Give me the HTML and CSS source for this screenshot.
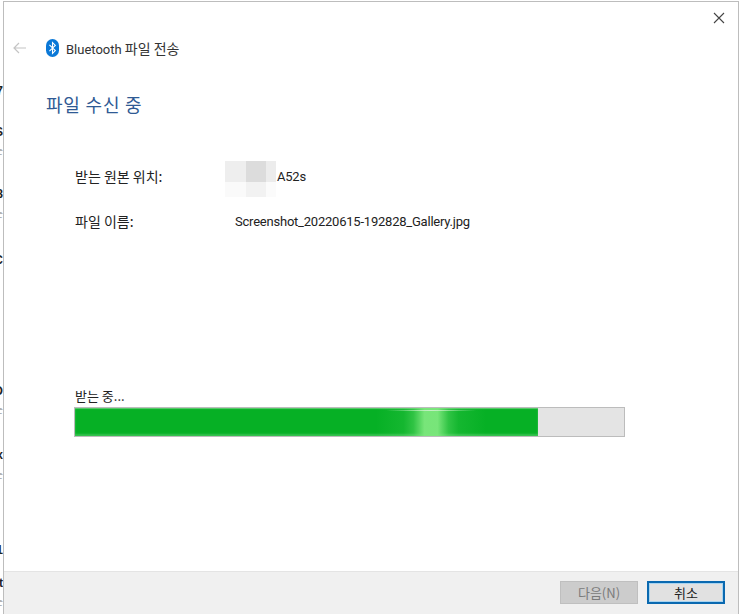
FILE: index.html
```html
<!DOCTYPE html>
<html>
<head>
    <title>Bluetooth 파일 전송</title>
    <link rel="stylesheet" href="styles.css">
</head>
<body>
    <div class="behind">
        <span class="frag frag-1">7</span>
        <span class="frag frag-2">S</span>
        <span class="tiny tiny-2">는</span>
        <span class="frag frag-3">8</span>
        <span class="tiny tiny-3">는</span>
        <span class="frag frag-4">C</span>
        <span class="frag frag-5">D</span>
        <span class="tiny tiny-5">는</span>
        <span class="frag frag-6">x</span>
        <span class="tiny tiny-6">는</span>
        <span class="frag frag-7">1</span>
        <span class="frag frag-8">t</span>
        <span class="tiny tiny-8">는</span>
    </div>
    <div class="window">
        <div class="close-row">
            <svg class="close" width="12" height="12" viewBox="0 0 12 12">
                <path d="M1 1L11 11M11 1L1 11" stroke="#444" stroke-width="1.1" fill="none"/>
            </svg>
        </div>
        <div class="title-row">
            <svg class="back" width="16" height="12" viewBox="0 0 16 12">
                <path d="M14 6H2M7 1L2 6L7 11" stroke="#c4c4c4" stroke-width="1.2" fill="none"/>
            </svg>
            <svg class="bt" width="13" height="18" viewBox="0 0 13 18">
                <rect x="0" y="0" width="13" height="18" rx="6.5" fill="#0a78d7"/>
                <path d="M3.4 5.8L9.3 11.6L6.5 14.4V3.6L9.3 6.4L3.4 12.2" stroke="#fff" stroke-width="1.1" fill="none"/>
            </svg>
            <span class="title-text"><span class="latin">Bluetooth</span> 파일 전송</span>
        </div>
        <h1 class="heading">파일 수신 중</h1>
        <div class="info">
            <div class="info-row">
                <span class="info-label">받는 원본 위치:</span>
                <span class="device">
                    <span class="mosaic">
                        <i class="m1"></i><i class="m2"></i><i class="m3"></i>
                        <i class="m4"></i><i class="m5"></i><i class="m6"></i>
                    </span>
                    <span class="device-name latin">A52s</span>
                </span>
            </div>
            <div class="info-row">
                <span class="info-label">파일 이름:</span>
                <span class="file-name latin">Screenshot_20220615-192828_Gallery.jpg</span>
            </div>
        </div>
        <div class="progress-area">
            <div class="progress-label">받는 중...</div>
            <div class="progress">
                <div class="progress-fill" style="width: 84.4%">
                    <div class="shine"></div>
                    <div class="streak"></div>
                </div>
            </div>
        </div>
        <div class="footer">
            <button class="btn btn-disabled">다음(N)</button>
            <button class="btn btn-default">취소</button>
        </div>
    </div>
</body>
</html>
```

FILE: styles.css
```css
html, body {
    margin: 0;
    height: 100%;
}
body {
    width: 740px;
    height: 615px;
    overflow: hidden;
    display: flex;
    background: #fff;
    font-family: "Noto Sans CJK KR", sans-serif;
    color: #222;
}
.latin {
    font-family: Roboto, sans-serif;
}
.behind {
    position: relative;
    width: 3px;
    overflow: hidden;
    background: #fff;
    flex: none;
}
.frag {
    position: absolute;
    right: 0;
    font: bold 12px "Liberation Sans", sans-serif;
    color: #222;
}
.tiny {
    position: absolute;
    right: 0;
    font-size: 9px;
    line-height: 12px;
    color: #777;
}
.frag-1 { top: 84px; }
.frag-2 { top: 125px; }
.frag-3 { top: 187px; }
.frag-4 { top: 253px; }
.frag-5 { top: 384px; }
.frag-6 { top: 448px; }
.frag-7 { top: 543px; }
.frag-8 { top: 576px; }
.tiny-2 { top: 145px; }
.tiny-3 { top: 208px; }
.tiny-5 { top: 404px; }
.tiny-6 { top: 469px; }
.tiny-8 { top: 596px; }
.window {
    width: 736px;
    height: 613px;
    margin-top: 1px;
    border: 1px solid #bdbdbd;
    border-bottom: 0;
    display: flex;
    flex-direction: column;
    background: #fff;
    box-sizing: border-box;
    flex: none;
}
.close-row {
    height: 31px;
    display: flex;
    justify-content: flex-end;
    align-items: center;
    padding-right: 13px;
}
.title-row {
    height: 30px;
    display: flex;
    align-items: center;
    padding-left: 9px;
}
.back {
    margin-left: -1px;
}
.bt {
    margin-left: 18px;
}
.title-text {
    margin-left: 7px;
    font-size: 14px;
    color: #333;
}
.title-text .latin {
    font-size: 13px;
}
.heading {
    margin: 29px 0 0 42px;
    font-size: 18px;
    font-weight: 400;
    line-height: 24px;
    color: #2f5a94;
    letter-spacing: 0.8px;
}
.info {
    margin: 48px 0 0 71px;
    font-size: 14px;
}
.info-row {
    height: 24px;
    margin-bottom: 21px;
    display: flex;
    align-items: center;
}
.info-label {
    width: 160px;
}
.device {
    display: flex;
    align-items: center;
    position: relative;
}
.mosaic {
    position: absolute;
    left: -10px;
    top: -8px;
    width: 51px;
    height: 36px;
    display: grid;
    grid-template-columns: 21px 20px 10px;
    grid-template-rows: 21px 15px;
}
.m1 { background: #eeeeee; }
.m2 { background: #dcdcdc; }
.m3 { background: #ececec; }
.m4 { background: #fafafa; }
.m5 { background: #f2f2f2; }
.m6 { background: #fbfbfb; }
.device-name {
    margin-left: 42px;
    position: relative;
    font-size: 13px;
    letter-spacing: -0.22px;
}
.file-name {
    font-size: 13px;
    letter-spacing: -0.22px;
}
.progress-area {
    margin: 133px 0 0 70px;
}
.progress-label {
    font-size: 13px;
    line-height: 18px;
    margin: 0 0 2px 1px;
}
.progress {
    width: 551px;
    height: 30px;
    box-sizing: border-box;
    border: 1px solid #bcbcbc;
    background: #e4e4e4;
}
.progress-fill {
    position: relative;
    height: 100%;
    background: #06b025;
    box-shadow: inset 0 1px 1px #5fce72, inset 0 -2px 2px #37c350;
    overflow: hidden;
}
.shine {
    position: absolute;
    left: 301px;
    top: 0;
    width: 110px;
    height: 100%;
    background: linear-gradient(to right, rgba(126,232,126,0), rgba(126,232,126,0.12) 25%, rgba(126,232,126,0.35) 34%, rgba(126,232,126,0.95) 44%, rgba(126,232,126,0.95) 56%, rgba(126,232,126,0.35) 66%, rgba(126,232,126,0.12) 75%, rgba(126,232,126,0));
}
.streak {
    position: absolute;
    left: 311px;
    top: 2px;
    width: 90px;
    height: 1px;
    background: linear-gradient(to right, rgba(190,240,190,0), #c4f0c4 50%, rgba(190,240,190,0));
}
.footer {
    margin-top: auto;
    height: 43px;
    background: #f0f0f0;
    border-top: 1px solid #e4e4e4;
    display: flex;
    justify-content: flex-end;
    gap: 9px;
    padding: 9px 13px 0 0;
    box-sizing: border-box;
}
.btn {
    width: 78px;
    height: 23px;
    padding: 0;
    font-family: inherit;
    font-size: 13px;
    line-height: 1;
    box-sizing: border-box;
}
.btn-disabled {
    background: #cccccc;
    border: 1px solid #bfbfbf;
    color: #7a7a7a;
}
.btn-default {
    background: #e1e1e1;
    border: 2px solid #0a69b0;
    outline: 1px solid #a8d4f0;
    outline-offset: -3px;
    color: #222;
}
```
